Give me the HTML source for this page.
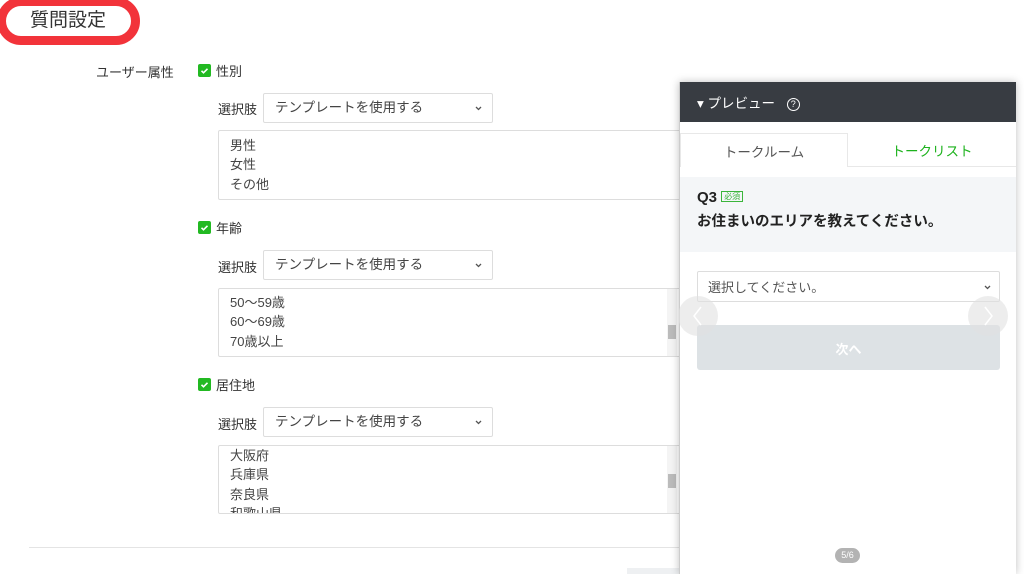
<!DOCTYPE html>
<html><head><meta charset="utf-8"><style>
*{box-sizing:border-box;margin:0;padding:0}
body{width:1024px;height:574px;overflow:hidden;background:#fff;font-family:"Liberation Sans","Noto Sans CJK JP",sans-serif;color:#444;position:relative;font-size:13px}
.abs{position:absolute}
.title{left:-3px;top:-3px;width:143px;height:48px;border:9px solid #f2333a;border-radius:24px;background:#fff;font-size:19px;color:#333;padding:2px 0 0 24px;line-height:26px}
.cb{width:13px;height:13px;background:#22b922;border-radius:2px;}
.cb svg{display:block}
.lbl{font-size:13px;color:#333}
.sel{width:230px;height:30px;border:1px solid #ddd;border-radius:2px;font-size:13.5px;color:#444;padding:3px 0 0 11px;line-height:22px}
.ch{position:absolute;right:10px;top:12px}
.ta{left:218px;width:475px;border:1px solid #ddd;border-radius:2px;font-size:13px;color:#444;padding:4px 11px;line-height:19.3px;overflow:hidden}
.sb{position:absolute;right:15px;top:0;width:10px;height:100%;background:#f4f4f4}
.sb i{position:absolute;left:1px;width:8px;height:14px;background:#bbb;top:36px}
</style></head><body>
<div class="abs title">質問設定</div>
<div class="abs lbl" style="left:96px;top:62px">ユーザー属性</div>

<div class="abs cb" style="left:198px;top:64px"><svg width="13" height="13"><path d="M3.5 6.8l2 2 4-4" stroke="#fff" stroke-width="1.6" fill="none"/></svg></div>
<div class="abs lbl" style="left:216px;top:61px">性別</div>
<div class="abs lbl" style="left:218px;top:99px">選択肢</div>
<div class="abs sel" style="left:263px;top:93px">テンプレートを使用する<svg class="ch" width="7" height="5"><path d="M1 1l2.5 2.5L6 1" stroke="#555" stroke-width="1.3" fill="none"/></svg></div>
<div class="abs ta" style="top:130px;height:70px;padding-top:5px">男性<br>女性<br>その他</div>

<div class="abs cb" style="left:198px;top:221px"><svg width="13" height="13"><path d="M3.5 6.8l2 2 4-4" stroke="#fff" stroke-width="1.6" fill="none"/></svg></div>
<div class="abs lbl" style="left:216px;top:218px">年齢</div>
<div class="abs lbl" style="left:218px;top:257px">選択肢</div>
<div class="abs sel" style="left:263px;top:250px">テンプレートを使用する<svg class="ch" width="7" height="5"><path d="M1 1l2.5 2.5L6 1" stroke="#555" stroke-width="1.3" fill="none"/></svg></div>
<div class="abs ta" style="top:288px;height:69px;padding-top:4px">50〜59歳<br>60〜69歳<br>70歳以上<div class="sb"><i style="top:36px"></i></div></div>

<div class="abs cb" style="left:198px;top:378px"><svg width="13" height="13"><path d="M3.5 6.8l2 2 4-4" stroke="#fff" stroke-width="1.6" fill="none"/></svg></div>
<div class="abs lbl" style="left:216px;top:375px">居住地</div>
<div class="abs lbl" style="left:218px;top:414px">選択肢</div>
<div class="abs sel" style="left:263px;top:407px">テンプレートを使用する<svg class="ch" width="7" height="5"><path d="M1 1l2.5 2.5L6 1" stroke="#555" stroke-width="1.3" fill="none"/></svg></div>
<div class="abs ta" style="top:445px;height:69px;padding-top:0">大阪府<br>兵庫県<br>奈良県<br>和歌山県<div class="sb"><i style="top:28px"></i></div></div>

<div class="abs" style="left:29px;top:547px;width:660px;height:1px;background:#e4e4e4"></div>
<div class="abs" style="left:627px;top:568px;width:60px;height:6px;background:#eef0f2"></div>

<div class="abs" style="left:679px;top:82px;width:337px;height:492px;background:#fff;box-shadow:0 0 8px rgba(0,0,0,.25);border-left:1px solid #ccc">
  <div class="abs" style="left:0;top:0;width:336px;height:40px;background:#383c42;color:#fff;font-size:13.5px;padding:10px 0 0 17px">▾ プレビュー <span style="display:inline-block;width:13px;height:13px;border:1.5px solid #fff;border-radius:50%;font-size:9px;text-align:center;line-height:10px;margin-left:8px;vertical-align:1px">?</span></div>
  <div class="abs" style="left:0;top:51px;width:168px;height:34px;border:1px solid #e8e8e8;border-bottom:none;font-size:13.5px;color:#555;text-align:center;padding-top:7px">トークルーム</div>
  <div class="abs" style="left:168px;top:84px;width:168px;height:1px;background:#e8e8e8"></div>
  <div class="abs" style="left:168px;top:51px;width:168px;font-size:13.5px;color:#1db21d;text-align:center;padding-top:7px">トークリスト</div>
  <div class="abs" style="left:0;top:95px;width:336px;height:75px;background:#f4f6f8"></div>
  <div class="abs" style="left:17px;top:107px;font-size:15px;font-weight:bold;color:#222">Q3 <span style="font-size:8px;color:#3bb53b;border:1px solid #3bb53b;padding:0 2px;vertical-align:3px;font-weight:normal">必須</span></div>
  <div class="abs" style="left:17px;top:128px;font-size:14.5px;font-weight:bold;color:#222">お住まいのエリアを教えてください。</div>
  <div class="abs" style="left:17px;top:189px;width:303px;height:31px;border:1px solid #ddd;border-radius:2px;font-size:13px;color:#555;padding:5px 0 0 10px">選択してください。<svg style="position:absolute;right:8px;top:13px" width="7" height="5"><path d="M1 1l2.5 2.5L6 1" stroke="#555" stroke-width="1.3" fill="none"/></svg></div>
  <div class="abs" style="left:17px;top:243px;width:303px;height:45px;background:#dde2e5;border-radius:3px;color:#fff;font-weight:bold;font-size:13px;text-align:center;padding-top:14px">次へ</div>
  <div class="abs" style="left:-2px;top:214px;width:40px;height:40px;border-radius:50%;background:rgba(225,225,225,.6)"><svg width="40" height="40"><path d="M23 11l-7 9 7 9" stroke="#fff" stroke-width="1.5" fill="none"/></svg></div>
  <div class="abs" style="left:288px;top:214px;width:40px;height:40px;border-radius:50%;background:rgba(225,225,225,.6)"><svg width="40" height="40"><path d="M17 11l7 9-7 9" stroke="#fff" stroke-width="1.5" fill="none"/></svg></div>
  <div class="abs" style="left:155px;top:466px;width:25px;height:15px;border-radius:8px;background:#b3b3b3;color:#fff;font-size:9px;text-align:center;line-height:15px">5/6</div>
</div>
</body></html>
